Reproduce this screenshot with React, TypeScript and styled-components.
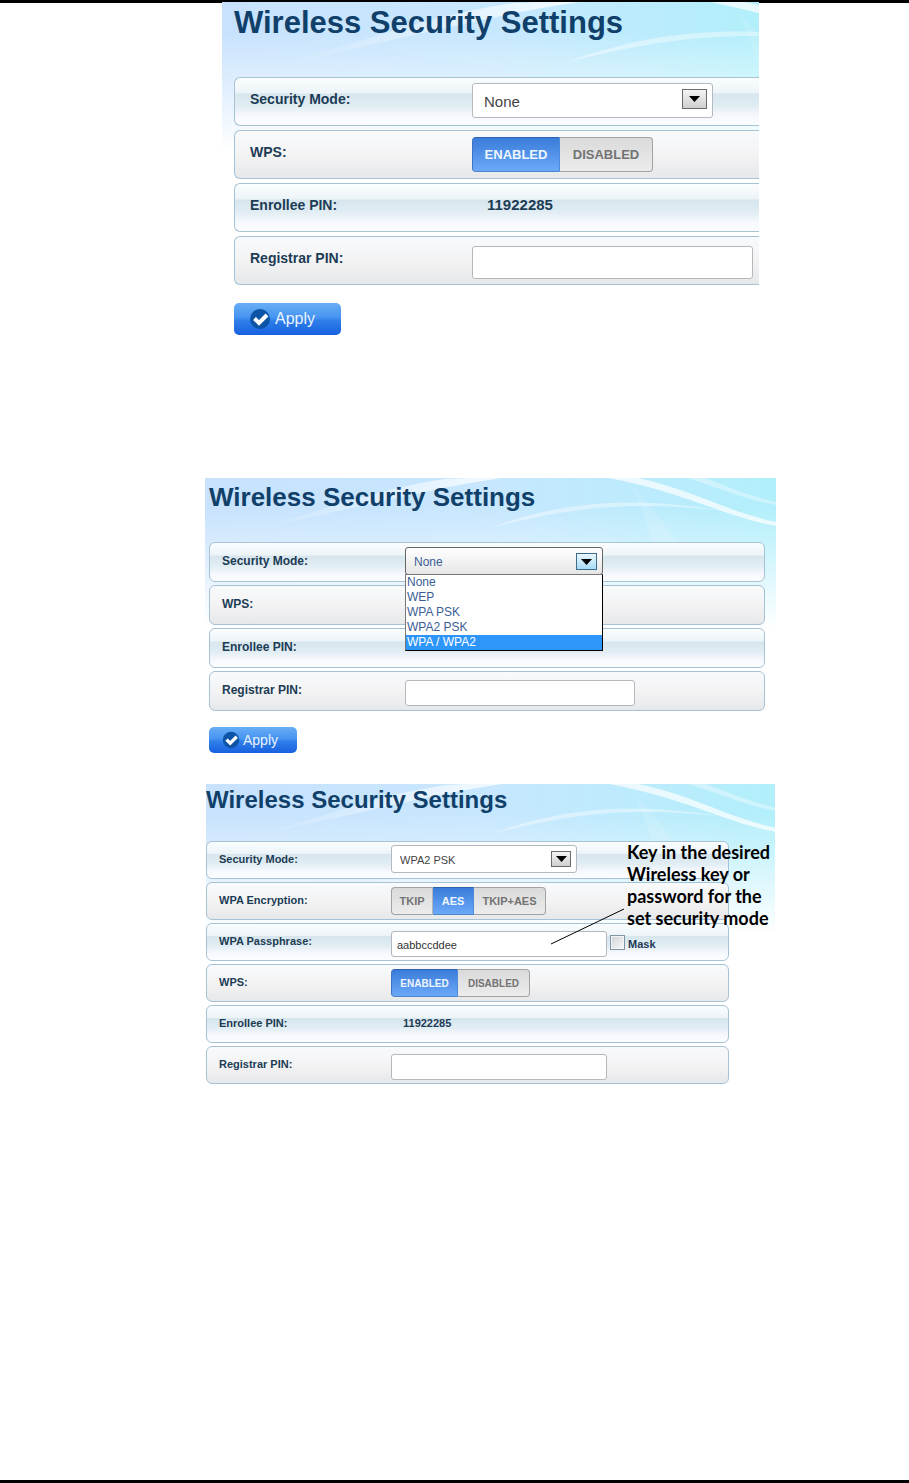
import React from 'react';
import styled, { createGlobalStyle, css, ThemeProvider } from 'styled-components';

interface Metrics {
  inset: number;
  padLeft: number;
  padRight: number;
  headerHeight: number;
  titleSize: number;
  titleLine: number;
  rowHeight: number;
  rowGap: number;
  labelPad: number;
  labelLift: number;
  labelWidth: number;
  labelSize: number;
  valueSize: number;
  fieldSize: number;
  controlHeight: number;
  inputHeight: number;
  selectWidth: number;
  inputWidth: number;
  arrowWidth: number;
  arrowHeight: number;
  toggleSize: number;
  waveWidth: number;
}

declare module 'styled-components' {
  export interface DefaultTheme extends Metrics {}
}

const large: Metrics = {
  inset: 17, padLeft: 12, padRight: 0, headerHeight: 75, titleSize: 31, titleLine: 42,
  rowHeight: 49, rowGap: 4, labelPad: 15, labelLift: 6, labelWidth: 237, labelSize: 14, valueSize: 15,
  fieldSize: 15, controlHeight: 35, inputHeight: 33, selectWidth: 241, inputWidth: 281,
  arrowWidth: 25, arrowHeight: 20, toggleSize: 13, waveWidth: 690,
};

const medium: Metrics = {
  inset: 0, padLeft: 4, padRight: 11, headerHeight: 64, titleSize: 26, titleLine: 38,
  rowHeight: 40, rowGap: 3, labelPad: 12, labelLift: 3, labelWidth: 195, labelSize: 12, valueSize: 12,
  fieldSize: 12, controlHeight: 28, inputHeight: 26, selectWidth: 198, inputWidth: 230,
  arrowWidth: 21, arrowHeight: 17, toggleSize: 11, waveWidth: 571,
};

const small: Metrics = {
  inset: 1, padLeft: 0, padRight: 46, headerHeight: 57, titleSize: 24, titleLine: 31,
  rowHeight: 38, rowGap: 3, labelPad: 12, labelLift: 2, labelWidth: 184, labelSize: 11, valueSize: 11,
  fieldSize: 11, controlHeight: 28, inputHeight: 26, selectWidth: 186, inputWidth: 216,
  arrowWidth: 20, arrowHeight: 16, toggleSize: 11, waveWidth: 571,
};

const GlobalStyle = createGlobalStyle`
  *, *::before, *::after { box-sizing: border-box; }
  body { margin: 0; background: #fff; }
  body, button, input, select { font-family: "Liberation Sans", Arial, sans-serif; }
`;

const Page = styled.main`
  display: flex;
  flex-direction: column;
  min-height: 100vh;
  padding: 0 133px 0 205px;
  border-top: 3px solid #000;
  border-bottom: 3px solid #000;
`;

const Panel = styled.section<{ $gap: number }>`
  position: relative;
  isolation: isolate;
  margin: ${(p) => p.$gap}px ${(p) => p.theme.inset}px 0;
  padding: 0 ${(p) => p.theme.padRight}px 0 ${(p) => p.theme.padLeft}px;
  background: linear-gradient(to bottom, rgba(255, 255, 255, 0) 30px, #fff 150px),
    linear-gradient(to right, #c8e2fd, #c7e7fe 50%, #b2effb);
`;

const WaveArt = styled.svg`
  position: absolute;
  z-index: -1;
  inset: 0;
  width: 100%;
  height: 150px;
`;

const Title = styled.h2`
  height: ${(p) => p.theme.headerHeight}px;
  margin: 0;
  color: #10406a;
  font-size: ${(p) => p.theme.titleSize}px;
  line-height: ${(p) => p.theme.titleLine}px;
  white-space: nowrap;
`;

const Rows = styled.div`
  display: flex;
  flex-direction: column;
  gap: ${(p) => p.theme.rowGap}px;
`;

const Row = styled.div<{ $tone: 'blue' | 'gray' }>`
  display: flex;
  align-items: center;
  height: ${(p) => p.theme.rowHeight}px;
  border: 1px solid #a6c2d5;
  border-radius: 6px;
  background: ${(p) =>
    p.$tone === 'blue'
      ? 'linear-gradient(#fbfdfe, #ecf4f8 32%, #d7e5ed 34%, #e1edf3 60%, #f5f8fd 80%, #fcfdff)'
      : 'linear-gradient(#f8fafc, #f3f3f4 50%, #e7e8ea)'};
  ${(p) =>
    p.theme.padRight === 0 &&
    css`
      border-right: 0;
      border-radius: 6px 0 0 6px;
    `}
`;

const labelText = css`
  flex: none;
  width: ${(p) => p.theme.labelWidth}px;
  padding: 0 0 ${(p) => p.theme.labelLift}px ${(p) => p.theme.labelPad}px;
  color: #1c3c55;
  font-size: ${(p) => p.theme.labelSize}px;
  font-weight: 700;
`;

const Label = styled.label`${labelText}`;
const Caption = styled.span`${labelText}`;

const Value = styled.output`
  padding: 0 0 ${(p) => p.theme.labelLift}px ${(p) => p.theme.labelPad}px;
  color: #1c3c55;
  font-size: ${(p) => p.theme.valueSize}px;
  font-weight: 700;
`;

const SelectWrap = styled.div`
  position: relative;
  width: ${(p) => p.theme.selectWidth}px;
  height: ${(p) => p.theme.controlHeight}px;
  margin-bottom: 2px;
`;

const Select = styled.select<{ $open?: boolean }>`
  appearance: none;
  width: 100%;
  height: 100%;
  padding: 2px 30px 0 ${(p) => p.theme.labelPad - 4}px;
  border: 1px solid ${(p) => (p.$open ? '#666' : '#b5b9bd')};
  border-radius: 3px;
  background: ${(p) => (p.$open ? 'linear-gradient(#fff, #e6e6e6)' : '#fff')};
  color: ${(p) => (p.$open ? '#3b5e95' : '#444')};
  font-size: ${(p) => p.theme.fieldSize}px;
`;

const ArrowBox = styled.span<{ $open?: boolean }>`
  position: absolute;
  top: 6px;
  right: 6px;
  display: flex;
  align-items: center;
  justify-content: center;
  width: ${(p) => p.theme.arrowWidth}px;
  height: ${(p) => p.theme.arrowHeight}px;
  border: 1px solid ${(p) => (p.$open ? '#3c6b8e' : '#6b6b6b')};
  background: ${(p) => (p.$open ? 'linear-gradient(#e9f6fd, #a9dbf5)' : 'linear-gradient(#f4f4f4, #cfcfcf)')};
  pointer-events: none;
`;

const OptionList = styled.ul`
  position: absolute;
  z-index: 1;
  top: calc(100% - 1px);
  left: 0;
  width: 100%;
  margin: 0;
  padding: 0;
  border: 1px solid #000;
  border-left-color: #777;
  border-top-color: #777;
  background: #fff;
  list-style: none;
`;

const Option = styled.li`
  padding-left: 1px;
  color: #3b5e95;
  font-size: 12px;
  line-height: 15px;

  &[aria-selected='true'] {
    background: #2e96fb;
    color: #fff;
  }
`;

const TextInput = styled.input`
  width: ${(p) => p.theme.inputWidth}px;
  height: ${(p) => p.theme.inputHeight}px;
  margin-top: 4px;
  padding: 2px 5px 0;
  border: 1px solid #b5b7ba;
  border-radius: 3px;
  background: #fff;
  color: #333;
  font-size: ${(p) => p.theme.fieldSize}px;
`;

const Toggle = styled.div<{ $columns: string; $size?: number }>`
  display: grid;
  grid-template-columns: ${(p) => p.$columns};
  height: ${(p) => p.theme.controlHeight}px;
  font-size: ${(p) => p.$size ?? p.theme.toggleSize}px;
`;

const ToggleButton = styled.button`
  padding: 0;
  border: 1px solid #a2a2a4;
  border-left-width: 0;
  background: linear-gradient(#dadada, #ececec);
  color: #737373;
  font-size: inherit;
  font-weight: 700;

  & + & { border-left: 0; }
  &:first-child { border-left-width: 1px; border-radius: 4px 0 0 4px; }
  &:last-child { border-radius: 0 4px 4px 0; }
  &:not(:last-child) { border-right-color: #b5b5b7; }

  &[aria-pressed='true'] {
    border-color: #2d62ad #4c8ade #4c84d0 #3b74c4;
    background: linear-gradient(#3a7cda, #6ba9f8);
    color: #eef6ff;
  }
`;

const ApplyButton = styled.button<{ $large?: boolean }>`
  display: flex;
  align-items: center;
  gap: ${(p) => (p.$large ? 4 : 3)}px;
  width: ${(p) => (p.$large ? 107 : 88)}px;
  height: ${(p) => (p.$large ? 32 : 26)}px;
  margin: ${(p) => (p.$large ? 18 : 16)}px 0 0;
  padding: 0 0 0 ${(p) => (p.$large ? 15 : 13)}px;
  border: 0;
  border-radius: 5px;
  background: linear-gradient(#69aef6, #4694f0 45%, #2f7fe9 55%, #1860e0);
  color: #e8f3ff;
  font-size: ${(p) => (p.$large ? 16 : 14)}px;
`;

const MaskLabel = styled.label`
  display: flex;
  align-items: center;
  gap: 3px;
  margin: 4px 0 0 3px;
  color: #1c3c55;
  font-size: 11px;
  font-weight: 700;
  line-height: 20px;
`;

const Checkbox = styled.input`
  appearance: none;
  width: 15px;
  height: 15px;
  margin: 0 0 4px;
  border: 1px solid #8095a4;
  background: linear-gradient(135deg, #cfd3d6, #f8f8f8);
  box-shadow: inset 0 0 0 1px #f3f6f8;
`;

const Callout = styled.p`
  position: absolute;
  top: 57px;
  left: 421px;
  width: 146px;
  margin: 0;
  color: #000;
  font: 700 18px/22px Lato, "Open Sans", sans-serif;
  white-space: nowrap;
`;

const Pointer = styled.svg`
  position: absolute;
  top: 124px;
  left: 345px;
`;

function Waves({ width }: { width: number }) {
  const scale = width / 571;
  return (
    <WaveArt aria-hidden="true">
      <defs>
        <linearGradient id={`fade${width}`} x1="0" x2="1" y1="0" y2="0">
          <stop offset="0" stopColor="#fff" stopOpacity="0" />
          <stop offset="1" stopColor="#fff" stopOpacity="0.85" />
        </linearGradient>
      </defs>
      <g transform={`scale(${scale})`}>
        <path d="M52 50 C110 36 165 12 240 1 L310 -2 C220 10 130 36 52 50Z" fill={`url(#fade${width})`} />
        <path d="M285 50 C360 22 430 18 520 33 C430 23 370 28 285 50Z" fill="#fff" opacity="0.4" />
        <path d="M410 -4 C480 6 520 34 571 44 L571 48 C520 40 475 10 380 -4Z" fill="#fff" opacity="0.7" />
        <path d="M490 -4 C520 8 545 18 571 24 L571 27 C540 22 510 8 470 -4Z" fill="#fff" opacity="0.35" />
        <path d="M428 10 C438 30 442 48 448 66 L472 66 C460 44 444 26 428 10Z" fill="#fff" opacity="0.12" />
      </g>
    </WaveArt>
  );
}

interface ModeFieldProps {
  id: string;
  value: string;
  open?: boolean;
}

const modes = ['None', 'WEP', 'WPA PSK', 'WPA2 PSK', 'WPA / WPA2'];

function ModeField({ id, value, open }: ModeFieldProps) {
  return (
    <Row $tone="blue">
      <Label htmlFor={id}>Security Mode:</Label>
      <SelectWrap>
        <Select id={id} defaultValue={value} $open={open}>
          {modes.map((mode) => (
            <option key={mode}>{mode}</option>
          ))}
        </Select>
        <ArrowBox $open={open}>
          <svg width="11" height="6" viewBox="0 0 11 6" aria-hidden="true">
            <path d="M0 0H11L5.5 6Z" fill="#000" />
          </svg>
        </ArrowBox>
        {open && (
          <OptionList role="listbox" aria-label="Security Mode">
            {modes.map((mode) => (
              <Option key={mode} role="option" aria-selected={mode === 'WPA / WPA2'}>
                {mode}
              </Option>
            ))}
          </OptionList>
        )}
      </SelectWrap>
    </Row>
  );
}

interface ChoiceProps {
  label: string;
  options: string[];
  active: string;
  columns: string;
  size?: number;
}

function ChoiceField({ label, options, active, columns, size }: ChoiceProps) {
  return (
    <Row $tone="gray">
      <Caption>{label}</Caption>
      <Toggle role="group" aria-label={label} $columns={columns} $size={size}>
        {options.map((option) => (
          <ToggleButton key={option} type="button" aria-pressed={option === active}>
            {option}
          </ToggleButton>
        ))}
      </Toggle>
    </Row>
  );
}

function EnrolleeField() {
  return (
    <Row $tone="blue">
      <Caption>Enrollee PIN:</Caption>
      <Value>11922285</Value>
    </Row>
  );
}

function RegistrarField({ id }: { id: string }) {
  return (
    <Row $tone="gray">
      <Label htmlFor={id}>Registrar PIN:</Label>
      <TextInput id={id} type="text" />
    </Row>
  );
}

function Apply({ large: isLarge }: { large?: boolean }) {
  const size = isLarge ? 22 : 18;
  return (
    <ApplyButton type="button" $large={isLarge}>
      <svg width={size} height={size} viewBox="0 0 22 22" aria-hidden="true">
        <circle cx="11" cy="11" r="10" fill="#0d54a6" />
        <path d="M5.500 10.500L10 15L18 7" fill="none" stroke="#fff" strokeWidth="4" />
      </svg>
      Apply
    </ApplyButton>
  );
}

const onOff = ['ENABLED', 'DISABLED'];

export default function App() {
  return (
    <>
      <GlobalStyle />
      <Page>
        <ThemeProvider theme={large}>
          <Panel $gap={-1}>
            <Waves width={large.waveWidth} />
            <Title>Wireless Security Settings</Title>
            <Rows>
              <ModeField id="mode-a" value="None" />
              <ChoiceField label="WPS:" options={onOff} active="ENABLED" columns="88px 93px" />
              <EnrolleeField />
              <RegistrarField id="registrar-a" />
            </Rows>
            <Apply large />
          </Panel>
        </ThemeProvider>

        <ThemeProvider theme={medium}>
          <Panel $gap={143}>
            <Waves width={medium.waveWidth} />
            <Title>Wireless Security Settings</Title>
            <Rows>
              <ModeField id="mode-b" value="None" open />
              <Row $tone="gray">
                <Caption>WPS:</Caption>
              </Row>
              <Row $tone="blue">
                <Caption>Enrollee PIN:</Caption>
              </Row>
              <RegistrarField id="registrar-b" />
            </Rows>
            <Apply />
          </Panel>
        </ThemeProvider>

        <ThemeProvider theme={small}>
          <Panel $gap={31}>
            <Waves width={small.waveWidth} />
            <Title>Wireless Security Settings</Title>
            <Rows>
              <ModeField id="mode-c" value="WPA2 PSK" />
              <ChoiceField
                label="WPA Encryption:"
                options={['TKIP', 'AES', 'TKIP+AES']}
                active="AES"
                columns="42px 41px 72px"
              />
              <Row $tone="blue">
                <Label htmlFor="passphrase">WPA Passphrase:</Label>
                <TextInput id="passphrase" type="text" defaultValue="aabbccddee" />
                <MaskLabel>
                  <Checkbox type="checkbox" />
                  Mask
                </MaskLabel>
              </Row>
              <ChoiceField label="WPS:" options={onOff} active="ENABLED" columns="67px 72px" size={10} />
              <EnrolleeField />
              <RegistrarField id="registrar-c" />
            </Rows>
            <Pointer width="74" height="37" viewBox="0 0 74 37" aria-hidden="true">
              <path d="M0 36L73 1" stroke="#000" fill="none" />
            </Pointer>
            <Callout>
              Key in the desired
              <br />
              Wireless key or
              <br />
              password for the
              <br />
              set security mode
            </Callout>
          </Panel>
        </ThemeProvider>
      </Page>
    </>
  );
}
